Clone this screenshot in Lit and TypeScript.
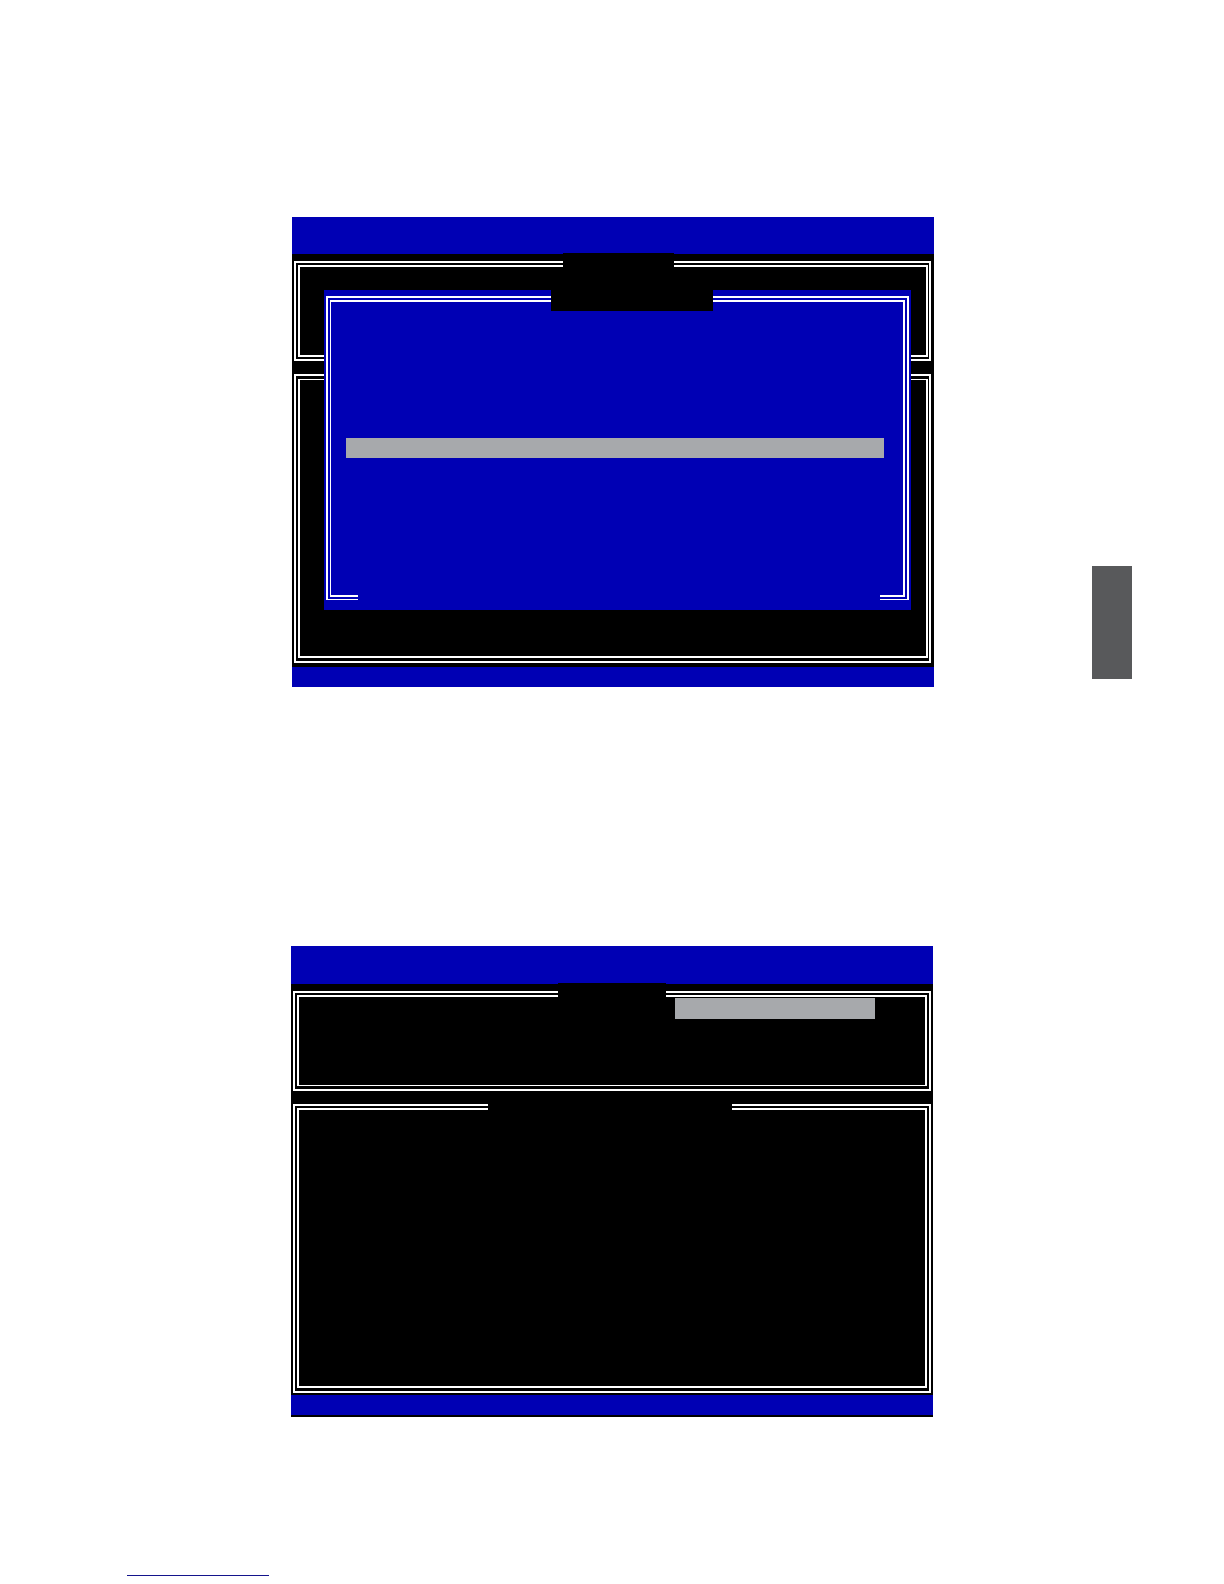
import { LitElement, html, css } from "lit";
import { customElement } from "lit/decorators.js";

const palette = css`
  :host {
    --blue: #0000b4;
    --grey: #a7a9ac;
    --line: #ffffff;
  }
  * {
    box-sizing: border-box;
  }
`;

/** Double-ruled box with a hollow centre. */
@customElement("double-frame")
class DoubleFrame extends LitElement {
  static styles = [
    palette,
    css`
      :host {
        display: flex;
        position: relative;
        box-sizing: border-box;
        border: 2px solid #ffffff;
        padding: 2px;
      }
      .inner {
        flex: 1;
        border-style: solid;
        border-color: var(--line);
        border-width: var(--inner-top, 2px) 2px var(--inner-bottom, 2px)
          var(--inner-left, 2px);
      }
    `,
  ];

  render() {
    return html`<div class="inner"><slot></slot></div>`;
  }
}

@customElement("app-root")
class AppRoot extends LitElement {
  static styles = [
    palette,
    css`
      :host {
        display: block;
        background: #ffffff;
        font-family: "Liberation Sans", sans-serif;
      }
      .page {
        display: grid;
        grid-template-columns: 291px minmax(0, 1fr) 291px;
        grid-template-rows: auto auto 1fr;
        min-height: 100vh;
        padding-top: 217px;
      }
      .screen {
        grid-column: 2;
        position: relative;
        display: flex;
        flex-direction: column;
        background: #000000;
      }
      .setup {
        margin: 0 -1px 0 1px;
      }
      .header {
        height: 37px;
        background: var(--blue);
      }
      .footer {
        height: 20px;
        background: var(--blue);
      }
      .panels {
        display: flex;
        flex-direction: column;
        gap: 13px;
        padding: 7px 2px 2px;
      }
      .options {
        height: 100px;
      }
      .list {
        height: 289px;
      }
      .setup .panels {
        padding: 7px 3px 4px 2px;
      }
      .setup .panels double-frame {
        padding-right: 1px;
      }
      .setup .list {
        --inner-top: 1px;
        padding-top: 3px;
        padding-bottom: 3px;
      }
      .summary {
        margin-top: 259px;
        border-bottom: 2px solid #000000;
      }
      .summary .header {
        height: 38px;
      }
      .summary .options {
        --inner-bottom: 1px;
        padding-bottom: 3px;
      }
      .summary .list {
        padding-bottom: 3px;
      }
      .caption {
        position: absolute;
        height: 21px;
        background: #000000;
      }
      .setup-caption {
        top: 36px;
        left: 271px;
        right: 260px;
      }
      .summary-caption {
        top: 37px;
        left: 267px;
        right: 267px;
      }
      .list-caption {
        top: 154px;
        left: 197px;
        right: 201px;
      }
      .choice {
        position: absolute;
        top: 52px;
        left: 384px;
        right: 58px;
        height: 21px;
        background: var(--grey);
      }
      .dialog {
        position: absolute;
        top: 73px;
        right: 23px;
        bottom: 77px;
        left: 32px;
        display: flex;
        padding: 6px 2px 10px;
        background: var(--blue);
      }
      .dialog double-frame {
        flex: 1;
        --inner-left: 1px;
        border-bottom-width: 1px;
      }
      .dialog-caption {
        top: 0;
        left: 227px;
        right: 198px;
      }
      .hints {
        position: absolute;
        left: 34px;
        right: 31px;
        bottom: 10px;
        height: 6px;
        background: var(--blue);
      }
      .selected {
        height: 20px;
        margin: 136px 19px 0 15px;
        background: var(--grey);
      }
      .tab {
        grid-column: 3;
        grid-row: 1;
        justify-self: end;
        width: 40px;
        height: 113px;
        margin: 349px 92px 0 0;
        background: #58595b;
      }
      .foot {
        grid-column: 1 / -1;
        display: flex;
        align-items: flex-end;
        padding: 0 0 8px 127px;
      }
      .link {
        width: 142px;
        height: 16px;
        border-bottom: 1px solid #14148c;
      }
    `,
  ];

  render() {
    return html`
      <main class="page">
        <section class="screen setup">
          <div class="header"></div>
          <div class="panels">
            <double-frame class="options"></double-frame>
            <double-frame class="list"></double-frame>
          </div>
          <div class="footer"></div>
          <div class="caption setup-caption"></div>
          <div class="dialog">
            <double-frame><div class="selected"></div></double-frame>
            <div class="caption dialog-caption"></div>
            <div class="hints"></div>
          </div>
        </section>
        <div class="tab"></div>
        <section class="screen summary">
          <div class="header"></div>
          <div class="panels">
            <double-frame class="options"></double-frame>
            <double-frame class="list"></double-frame>
          </div>
          <div class="footer"></div>
          <div class="caption summary-caption"></div>
          <div class="caption list-caption"></div>
          <div class="choice"></div>
        </section>
        <footer class="foot"><a class="link" href="#"></a></footer>
      </main>
    `;
  }
}
